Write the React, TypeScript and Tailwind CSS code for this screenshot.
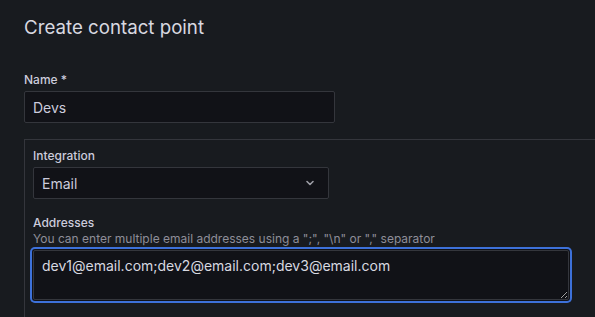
import React from 'react'

function ChevronDown() {
  return (
    <svg width="16" height="16" viewBox="0 0 16 16" fill="none" className="text-[#9d9ea6]">
      <path d="M5 6.5l3 3 3-3" stroke="currentColor" strokeWidth="1.6" strokeLinecap="round" strokeLinejoin="round" />
    </svg>
  )
}

export default function App() {
  return (
    <div
      className="h-[317px] w-[595px] overflow-hidden bg-[#181b1f] px-6 text-[#ccccdc]"
      style={{ fontFamily: 'Inter, "Noto Sans", sans-serif' }}
    >
      <h1 className="pt-[14px] text-[18.7px] leading-[28px] font-normal text-[#d8d9e0]">Create contact point</h1>

      <label className="mt-[30px] block text-[12px] leading-[16px] font-medium">Name *</label>
      <div className="mt-[3px] flex h-[32px] w-[311px] items-center rounded-[2px] border border-[#34363c] bg-[#111217] px-2 text-[14px]">
        Devs
      </div>

      <div className="mt-4 min-h-[220px] w-[600px] border-t border-l border-[#34363c] pt-2 pl-2">
        <label className="block text-[12px] leading-[16px] font-medium">Integration</label>
        <div className="mt-[3px] flex h-[32px] w-[296px] items-center justify-between rounded-[2px] border border-[#34363c] bg-[#111217] pr-[10px] pl-2 text-[14px]">
          <span>Email</span>
          <ChevronDown />
        </div>

        <label className="mt-4 block text-[12px] leading-[16px] font-medium">Addresses</label>
        <div className="text-[12px] leading-[16px] text-[#8e8e98]">
          You can enter multiple email addresses using a ";", "\n" or "," separator
        </div>
        <textarea
          className="mt-[3px] block h-[50px] w-[536px] resize-y rounded-[2px] border border-[#34363c] bg-[#111217] px-2 pt-[6px] text-[14px] leading-[18px] text-[#d8d9e0] shadow-[0_0_0_1px_#111217,0_0_0_3px_#3d71d9] outline-none [color-scheme:dark]"
          defaultValue="dev1@email.com;dev2@email.com;dev3@email.com"
        />
      </div>
    </div>
  )
}
